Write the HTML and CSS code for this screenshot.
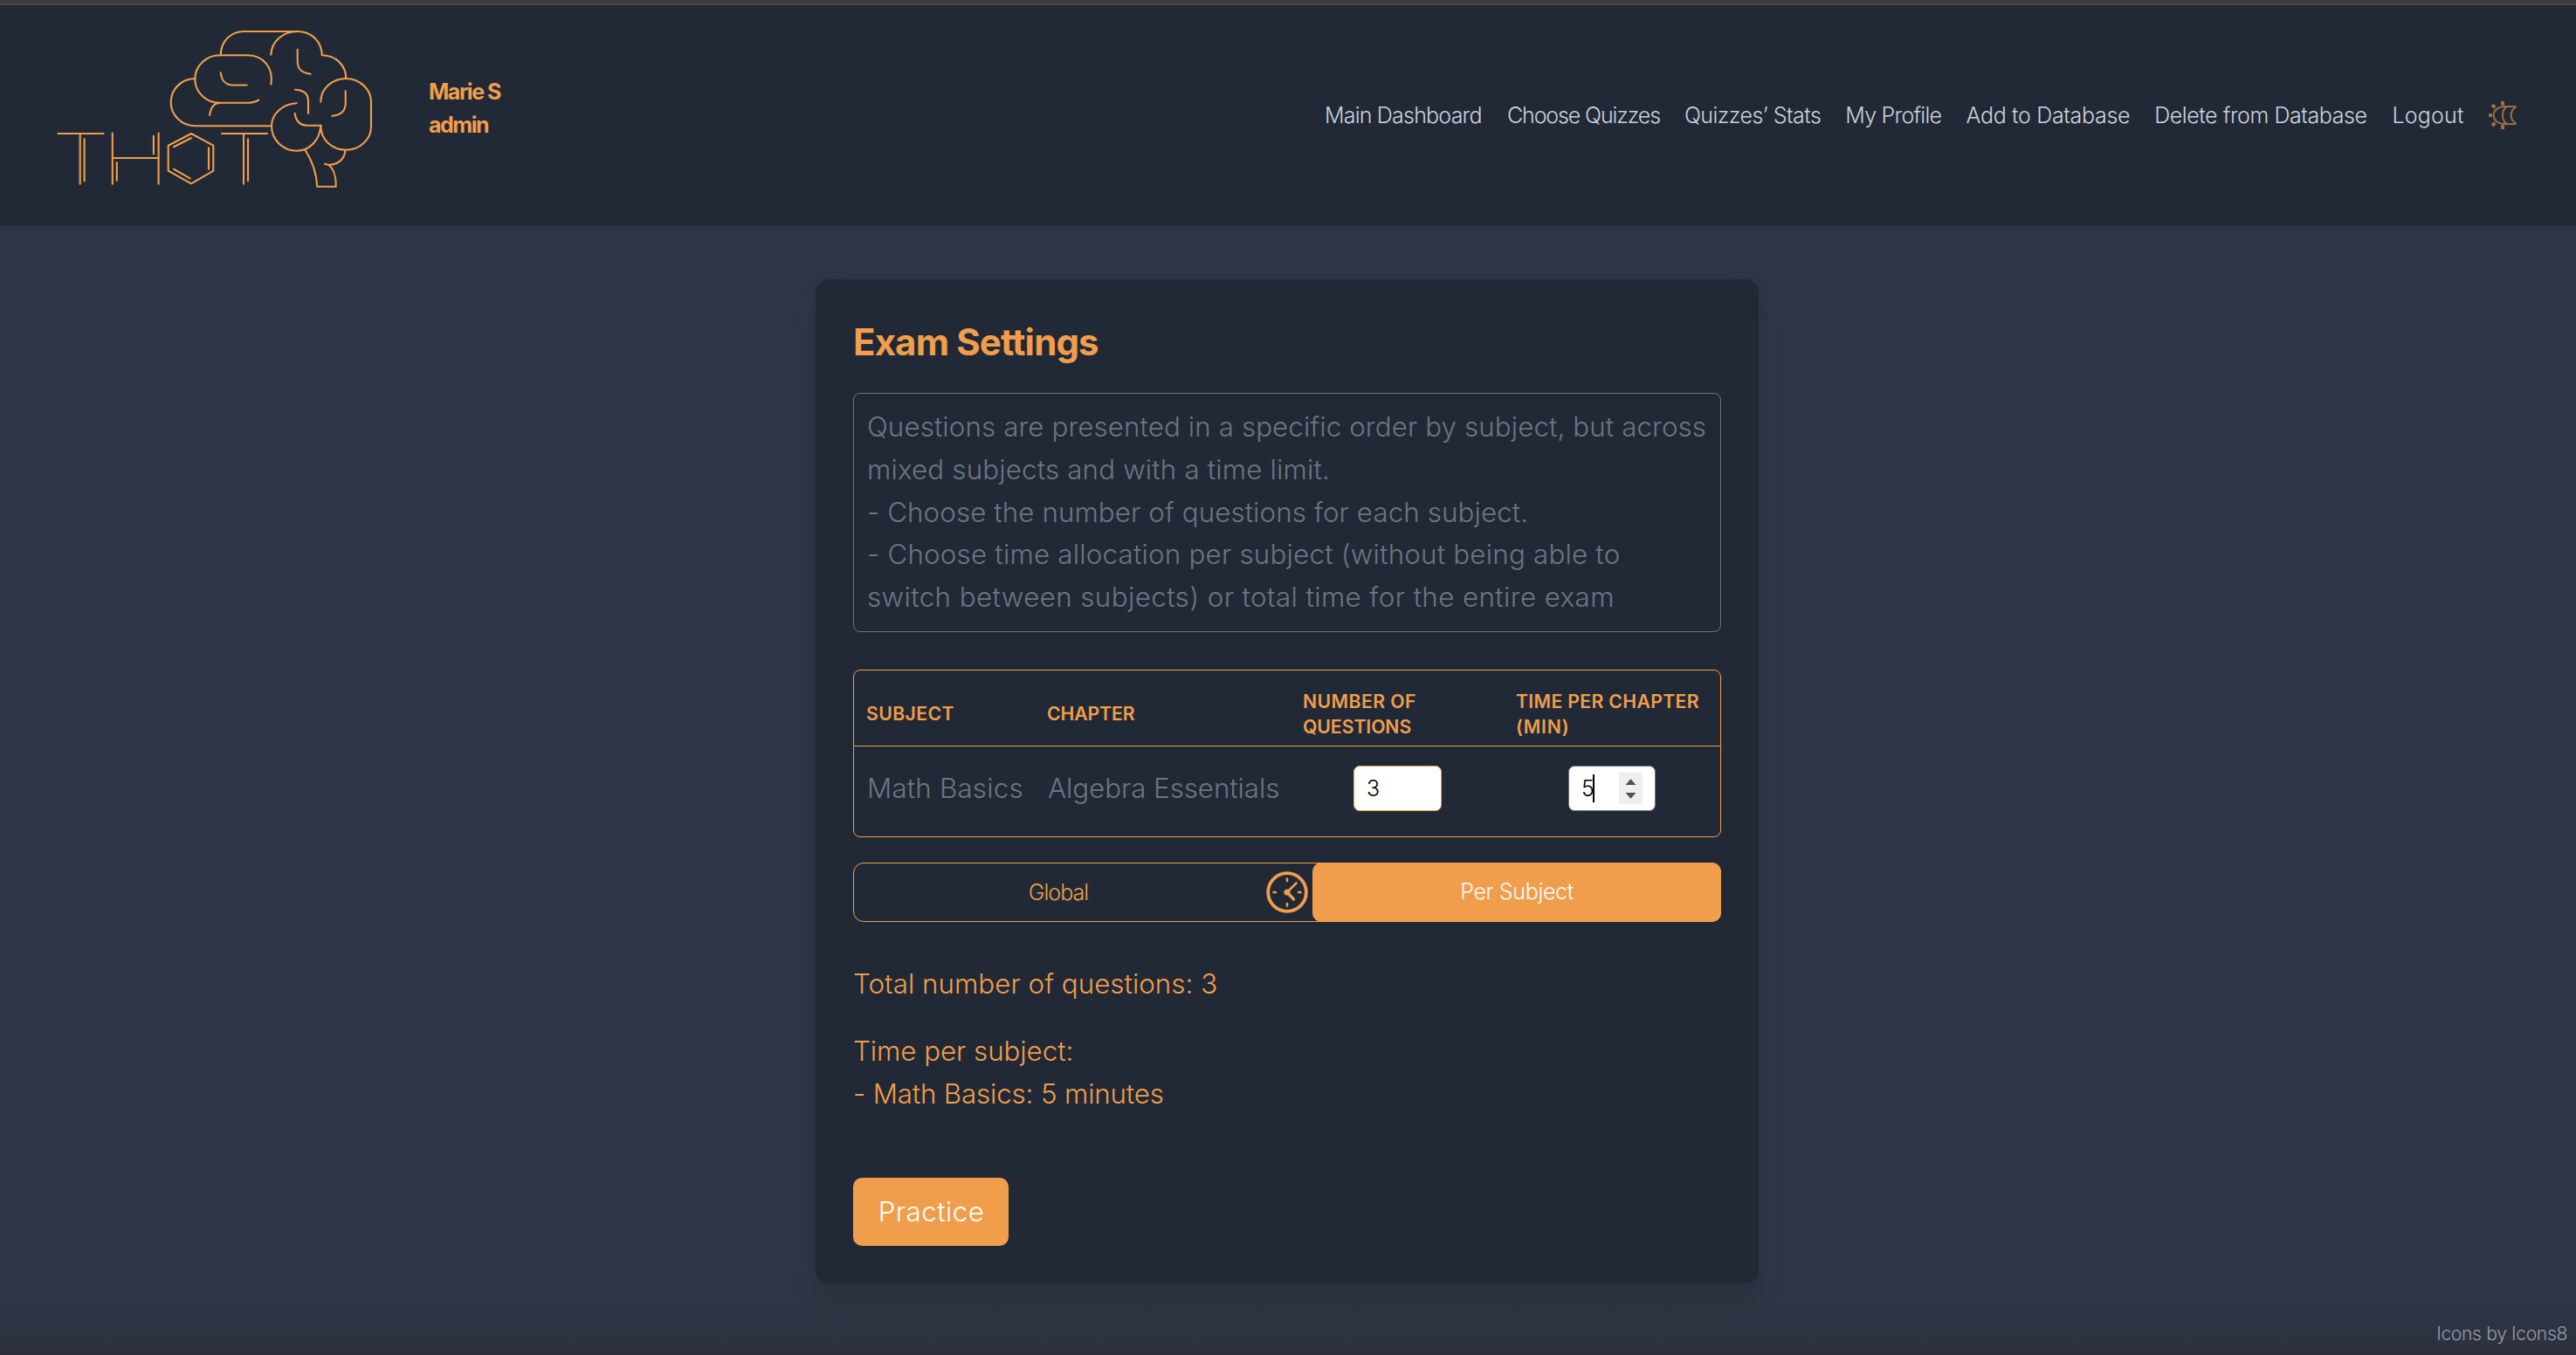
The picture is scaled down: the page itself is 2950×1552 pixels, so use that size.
FILE: index.html
```html
<!DOCTYPE html>
<html lang="en">
<head>
<meta charset="utf-8">
<title>Thot – Exam Settings</title>
<link rel="stylesheet" href="styles.css">
</head>
<body>
<header class="header">
  <svg class="logo" viewBox="60 30 370 190" fill="none" stroke="#f09e4b" stroke-width="2.1" stroke-linecap="round" stroke-linejoin="round">
    <path d="M223.5 90C208 90 195.7 102 195.7 117S208 144.3 224 144.3H311"/>
    <path d="M296.3 114.5Q291 117.8 283.3 117.8H252A28.5 27.2 0 0 1 223.3 90.7A28.5 27.3 0 0 1 252.7 63.3H283.3C301 63.3 313.5 77 310.3 96.5"/>
    <path d="M240 132Q242 118 252 118"/>
    <path d="M252.7 63.3C252.7 47 265 36 279 36H341"/>
    <path d="M310.3 62.7C311 47 324 36 341 36C357 36 368.7 48 368.7 63.3C384 63.3 396 74 396.3 89.7"/>
    <path d="M252.7 83.3C254 93 258 97.5 267 97.5H282.7M340.7 56.7V70C340.7 79 345 83.5 355.7 84.7M338 102.7C347.5 103 353 107 353 116V130M337.7 130C339 139 344 143.7 352 143.7H367.3"/>
    <path d="M339.7 118.3C324 119 311 130 311 144.5C311 160 324 172.7 340 172.7C355 172.7 366.5 160 367.3 143.7"/>
    <path d="M367.3 116.7C367.3 102 380 90 396 90S425 102 425 117V145C425 160 412 171.7 396 171.7S367.3 160 367.3 143.7M395.7 104.3V118C395.7 127 391 132 380.3 132.7"/>
    <path d="M349.7 172.3C358 185 362.5 200 363.3 213.7H384.7C385 203 382 193 376 188.7L372 187.7Q376 189 379 188.6C389 188 395.3 180 395.3 171.7"/>
    <path d="M66.4 153H118.5M91.7 153V210.7M96.6 159.3V207.3M128.8 152.5V210.7M181.6 152.5V210.7M128.8 181H181.6M175.9 155.7V176.3M133.8 186V206.7"/>
    <path d="M219 153L244.3 166.7V195.7L219 210.3L192.7 195.7V166.7ZM199 168.3L219 158M239 169.3V193.7M199 193.7L217.7 204.3M254 153H306M279 153V210.7M284 159.3V207.3"/>
  </svg>
  <div class="user"><span>Marie S</span><span>admin</span></div>
  <nav class="nav">
    <a class="n1">Main Dashboard</a>
    <a class="n2">Choose Quizzes</a>
    <a class="n3">Quizzes’ Stats</a>
    <a class="n4">My Profile</a>
    <a class="n5">Add to Database</a>
    <a class="n6">Delete from Database</a>
    <a class="n7">Logout</a>
    <svg class="theme" viewBox="120 78 96 96" fill="none" stroke="#f09e4b" stroke-width="6">
      <path d="M214 96H170C150 98 137 110 137 126S150 154 170 156H214"/>
      <path d="M181 97C172 103 168 114 168 126S172 149 181 155M214 98C203 104 197 114 197 126S203 148 214 154"/>
      <path stroke-width="12" d="M168 78V92M168 160V174M120 126H132M132 90L142 100M132 162L142 152"/>
    </svg>
  </nav>
</header>
<main class="main">
  <section class="card">
    <h1 class="title">Exam Settings</h1>
    <div class="info">
      <div class="l1">Questions are presented in a specific order by subject, but across</div>
      <div class="l2">mixed subjects and with a time limit.</div>
      <div class="l3">- Choose the number of questions for each subject.</div>
      <div class="l4">- Choose time allocation per subject (without being able to</div>
      <div class="l5">switch between subjects) or total time for the entire exam</div>
    </div>
    <div class="table">
      <div class="thead">
        <div class="h1">SUBJECT</div>
        <div class="h2">CHAPTER</div>
        <div><span class="h3">NUMBER OF</span><br><span class="h4">QUESTIONS</span></div>
        <div><span class="h5">TIME PER CHAPTER</span><br><span class="h6">(MIN)</span></div>
      </div>
      <div class="trow">
        <div class="c1">Math Basics</div>
        <div class="c2">Algebra Essentials</div>
        <div class="field"><span>3</span></div>
        <div class="field focus"><span>5</span><i class="caret"></i>
          <svg class="spin" viewBox="0 0 27 36" fill="#505050"><path d="M7.5 14L13.5 7.2L19.5 14ZM7.5 23L13.5 29.8L19.5 23Z"/></svg>
        </div>
      </div>
    </div>
    <div class="toggle">
      <div class="global">Global</div>
      <svg class="clock" viewBox="0 0 48 48" fill="none" stroke="#f09e4b" stroke-linecap="round">
        <circle cx="24" cy="24" r="21.8" stroke-width="3.8"/>
        <path stroke-width="2.6" d="M24 8.5V11M24 37V39.5M8.5 24H11M37 24H39.5M24 24L34.5 13.5"/>
        <path stroke-width="3.4" d="M24 24L31.5 32"/>
        <circle cx="24" cy="24" r="3.6" fill="#f09e4b" stroke="none"/>
      </svg>
      <div class="per">Per Subject</div>
    </div>
    <div class="summary">
      <p class="s1">Total number of questions: 3</p>
      <p class="s2">Time per subject:</p>
      <p class="s3">- Math Basics: 5 minutes</p>
    </div>
    <button class="practice">Practice</button>
  </section>
</main>
<footer class="footer">Icons by Icons8</footer>
</body>
</html>
```
FILE: styles.css
```css
* { box-sizing: border-box; }

body {
  margin: 0;
  height: 1552px;
  display: flex;
  flex-direction: column;
  border-top: 4px solid #3b3b3b;
  overflow: hidden;
  background: linear-gradient(#303646 0, #303646 1460px, #2d3341 1530px, #2b303c 1552px);
  color: #f09e4b;
  font: 300 31.3px/48.75px Inter, "Liberation Sans", sans-serif;
  white-space: nowrap;
}

.header {
  height: 254px;
  flex: none;
  display: flex;
  border-top: 2px solid #474747;
  background: #222936;
  box-shadow: 0 3px 10px rgba(0, 0, 0, .12);
}
.logo { width: 370px; height: 190px; margin: 24px 0 0 60px; }
.user {
  display: flex;
  flex-direction: column;
  margin: 80px 0 0 61px;
  font: 700 25px/38px Inter, sans-serif;
  letter-spacing: -1.45px;
}
.nav {
  display: grid;
  grid-template-columns: 209px 203px 184.4px 138.2px 215.7px 272.2px 110.6px 32px;
  height: 40px;
  margin: 106px 68px 0 auto;
  color: #cbd1dd;
  font-size: 25px;
  line-height: 40px;
}
.theme { width: 32px; height: 32px; margin-top: 4px; opacity: .6; }
.n1 { letter-spacing: -.78px; }
.n2 { letter-spacing: -1.12px; }
.n3 { letter-spacing: -.55px; }
.n4 { letter-spacing: -.75px; }
.n5 { letter-spacing: -.32px; }
.n6 { letter-spacing: -.43px; }
.n7 { letter-spacing: .2px; }

.main { display: flex; padding: 62px 0 0 934px; }
.card {
  width: 1080px;
  height: 1150px;
  padding: 43px;
  border-radius: 15px;
  background: #222936;
  box-shadow: 0 20px 36px -6px rgba(0, 0, 0, .12), 0 0 14px rgba(0, 0, 0, .06);
}
.title {
  margin: 0 0 29px;
  font: 700 42px/57px Inter, sans-serif;
  padding-bottom: 1px;
  letter-spacing: -.85px;
}
.info {
  height: 274px;
  padding: 14px 15px;
  border: 1px solid #6b7280;
  border-radius: 8px;
  color: #6d7482;
}
.l1 { letter-spacing: .11px; }
.l2 { letter-spacing: .17px; }
.l3 { letter-spacing: .1px; }
.l4 { letter-spacing: .22px; }
.l5 { letter-spacing: .41px; }

.table {
  height: 192px;
  margin-top: 43px;
  border: 1px solid #f09e4b;
  border-radius: 8px;
}
.thead, .trow {
  display: grid;
  grid-template-columns: 207px 293px 244px 1fr;
  align-items: center;
  padding-left: 15px;
}
.thead {
  height: 87px;
  padding: 13px 0 0 14px;
  border-bottom: 1px solid #f09e4b;
  font: 600 21.2px/29px Inter, sans-serif;
}
.h1 { letter-spacing: .4px; }
.h2 { letter-spacing: -.1px; }
.h3 { letter-spacing: .45px; }
.h4 { letter-spacing: -.05px; }
.h5 { letter-spacing: .35px; }
.h6 { letter-spacing: .7px; }
.trow { height: 96px; color: #6d7482; }
.c1 { letter-spacing: .2px; }
.c2 { letter-spacing: -.05px; }
.field {
  display: flex;
  align-items: center;
  width: 101px;
  height: 52px;
  margin-left: 57px;
  padding-left: 14px;
  border: 1px solid #f09e4b;
  border-radius: 7px;
  background: #fff;
  color: #000;
  font-size: 25px;
}
.focus { width: 100px; margin-left: 59px; padding-right: 14px; border-color: #6b7280; }
.focus span { width: 13px; }
.caret { width: 2px; height: 32px; background: #000; }
.spin { width: 27px; height: 36px; margin-left: auto; background: #efefef; }

.toggle {
  display: flex;
  align-items: center;
  height: 68px;
  margin-top: 29px;
  border: 1px solid #f09e4b;
  border-radius: 12px;
  font-size: 25px;
}
.global { width: 472px; padding-right: 4px; text-align: center; letter-spacing: -.95px; }
.clock { width: 48px; height: 48px; }
.per {
  flex: 1;
  height: 68px;
  margin: 0 -1px 0 5px;
  border-radius: 10px;
  background: #f09e4b;
  color: #fff;
  line-height: 67px;
  text-align: center;
  letter-spacing: -.35px;
}

.summary { padding-top: 47px; }
.summary p { margin: 0; }
.s1 { letter-spacing: .04px; }
.s2 { padding-top: 28px; letter-spacing: -.05px; }
.s3 { letter-spacing: -.15px; }

.practice {
  display: block;
  width: 178px;
  height: 78px;
  margin-top: 72px;
  padding: 0 0 0 1px;
  border: 0;
  border-radius: 10px;
  background: #f09e4b;
  color: #fff;
  font: inherit;
  letter-spacing: .45px;
}
.footer {
  margin-top: 37px;
  padding-right: 10px;
  color: #949aa8;
  font-size: 21.2px;
  line-height: 40px;
  letter-spacing: -.4px;
  text-align: right;
}
```
